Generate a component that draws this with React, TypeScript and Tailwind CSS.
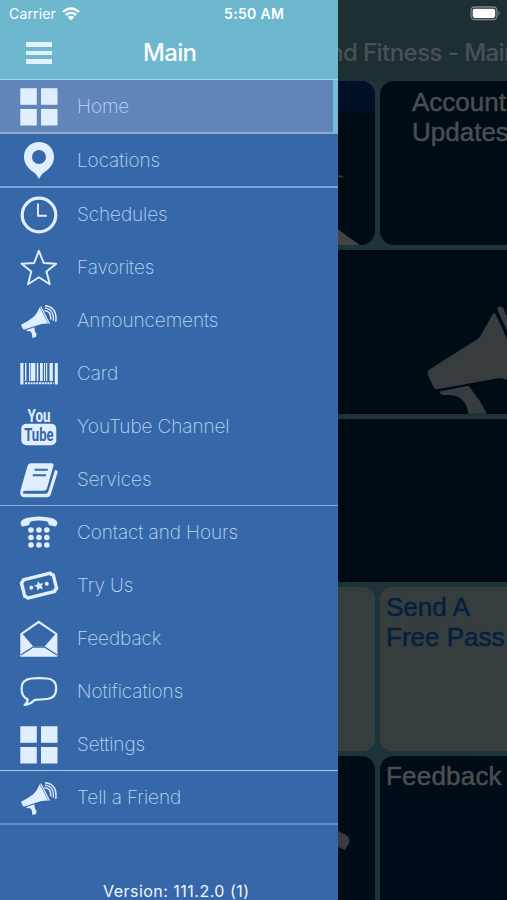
import type { ReactNode } from "react";

const Ic = ({ children }: { children: ReactNode }) => (
  <svg viewBox="0 0 38 38" className="h-[38px] w-[38px] shrink-0 overflow-visible" fill="currentColor">
    {children}
  </svg>
);

const line = (w: number) => ({ fill: "none", stroke: "currentColor", strokeWidth: w });

const Grid = () => (
  <Ic>
    <path d="M.3.3h16.5v16.5H.3zM21 .3h16.5v16.5H21zM.3 21h16.5v16.5H.3zM21 21h16.5v16.5H21z" />
  </Ic>
);
const Pin = () => (
  <Ic>
    <path fillRule="evenodd" d="M19 0C10.500 0 4 6.500 4 14.800C4 23 9.500 27.500 14 30.500C16.500 32.400 18 35 19 37C20 35 21.500 32.400 24 30.500C28.500 27.500 34 23 34 14.800C34 6.500 27.500 0 19 0ZM19 8a7 7 0 1 1 0 14a7 7 0 1 1 0-14Z" />
  </Ic>
);
const Clock = () => (
  <Ic>
    <circle cx="19" cy="19" r="16.800" {...line(3.2)} />
    <path d="M18 7.500V19.800H26.800" {...line(1.9)} />
  </Ic>
);
const Star = () => (
  <Ic>
    <path d="M18.900 1.800L23.700 14L36.200 14.700L26.500 22.600L29.800 35.200L18.900 28.200L8 35.200L11.300 22.600L1.600 14.700L14.100 14Z" strokeLinejoin="round" {...line(1.9)} />
  </Ic>
);
const Horn = () => (
  <Ic>
    <path d="M1 22.800Q8 19.500 13.500 15Q17.500 11 19.700 5.200L28.200 21.600Q22 21.500 15 24L3.800 27.800Q2 25.800 1 22.800Z" />
    <path d="M20.700 4.500L29.500 21.800" {...line(1.200)} />
    <path d="M6.500 27.900L14.500 25.200Q14 29 16.600 32.200L16 35L12.300 36Q12.300 31 10.500 29.600Q9 28.400 6.700 29.200Z" />
    <path d="M24.500 8.600Q31.400 9.300 30.800 17.500M25 3.800Q37.600 5 35.800 19.800" {...line(1.500)} />
    <path d="M24.800 6.200Q34.400 7 33.300 18.800" {...line(1.300)} />
  </Ic>
);
const Barcode = () => (
  <Ic>
    <path d="M.3 8h3.200v21.500H.3zM5 8h1.400v18H5zM9 8h1.400v18H9zM11 8h4.300v18H11zM16.800 8h1.500v18h-1.500zM20 8h2.800v18H20zM24 8h1v18h-1zM26 8h1.200v18H26zM29.500 8h3.300v18h-3.300zM34.800 8h3v21.500h-3z" />
    <path d="M5 28.300H33.500" strokeDasharray="2 .8" {...line(2)} />
  </Ic>
);
const Tube = () => (
  <Ic>
    <text x="7.500" y="13.800" textLength="23" lengthAdjust="spacingAndGlyphs" className="font-['Roboto'] text-[18px] font-bold">You</text>
    <rect x="1.300" y="15.700" width="35" height="21.500" rx="5" />
    <text x="4.200" y="33" textLength="29.500" lengthAdjust="spacingAndGlyphs" className="fill-[#3668a9] font-['Roboto'] text-[17.500px] font-bold">Tube</text>
  </Ic>
);
const Book = () => (
  <Ic>
    <path d="M10.500 2.200H31.500Q34.300 2.200 33.400 5L27 27.300Q26.300 29.700 24 29.700H5.500Q2.800 29.700 2.800 31.500Q2.800 32.700 5 32.700H26Q27.600 32.700 28.200 31L35 9Q38.200 9 37.400 12L30.800 33.300Q30 36.200 27 36.200H4.500Q-.2 36.200 .3 31Q.5 29 1.300 26.500L7.500 5Q8.300 2.200 10.500 2.200Z" />
    <path d="M14.600 8.800H27.800M12.800 14.300H26" className="stroke-[#3668a9] [stroke-width:1.900]" />
  </Ic>
);
const Phone = () => (
  <Ic>
    <path d="M.6 9.500Q.5 5.500 6.500 4Q19 .8 31.500 4Q37.500 5.500 37.400 9.500L36 12.600Q33 12.200 28.800 11Q28.800 8 26.500 7.300Q19 5.600 11.500 7.300Q9.200 8 9.200 11Q5 12.200 2 12.600Z" />
    {[16, 23.500, 31].map((y) => [11, 19, 26.800].map((x) => <circle key={`${x}-${y}`} cx={x} cy={y} r="2.800" />))}
  </Ic>
);
const Ticket = () => (
  <Ic>
    <g transform="rotate(-14 19 18.500)">
      <path d="M5 9.300H33Q33.300 11.300 35.400 11.600V25.800Q33.300 26.100 33 28H5Q4.700 26.100 2.600 25.800V11.600Q4.700 11.300 5 9.300Z" strokeLinejoin="round" {...line(3.4)} />
      <circle cx="11" cy="18.700" r="2" />
      <circle cx="27" cy="18.700" r="2" />
      <path d="M19 14L20.400 17L23.800 17.400L21.300 19.700L22 23.100L19 21.400L16 23.100L16.700 19.700L14.200 17.400L17.600 17Z" />
    </g>
  </Ic>
);
const Mail = () => (
  <Ic>
    <path fillRule="evenodd" d="M18.700.5L37.400 13.500V36.500H.3V13.500ZM18.700 3.300L2.700 14.200L13 26.200H24.800L35.200 14.200Z" />
    <path d="M.8 35L13.300 27H24.500L37 35" className="fill-none stroke-[#3668a9] [stroke-width:1.300]" />
    <path d="M.3 36.500L13.500 28H24.300L37.400 36.500Z" />
  </Ic>
);
const Bubble = () => (
  <Ic>
    <path d="M11.500 5.500Q19 4.700 27 5.500Q36.300 6.500 36.200 15.200Q36.300 25.200 27 26Q20 26.500 14.800 26.800Q10.800 31.300 4.500 32Q7.700 29.500 7.700 26.200Q1.600 24 1.600 15.500Q1.500 6.500 11.500 5.500Z" strokeLinejoin="round" {...line(2.200)} />
  </Ic>
);

type Item = [string, () => ReactNode, string];
const items: Item[] = [
  ["Home", Grid, "h-[54px] border-b-2 border-[#8fa9d0] bg-[#6285b9]"],
  ["Locations", Pin, "h-[54px] border-b-2 border-[#82a6d3]"],
  ["Schedules", Clock, "h-[53px]"],
  ["Favorites", Star, "h-[53px]"],
  ["Announcements", Horn, "h-[53px]"],
  ["Card", Barcode, "h-[53px]"],
  ["YouTube Channel", Tube, "h-[53px]"],
  ["Services", Book, "h-[53px] border-b border-[#8daedb]"],
  ["Contact and Hours", Phone, "h-[53px]"],
  ["Try Us", Ticket, "h-[53px]"],
  ["Feedback", Mail, "h-[53px]"],
  ["Notifications", Bubble, "h-[53px]"],
  ["Settings", Grid, "h-[53px] border-b border-[#a9cbea]"],
  ["Tell a Friend", Horn, "h-[54px] border-b-2 border-[#6193c9]"],
];

const Wifi = () => (
  <svg viewBox="0 0 18 14" className="h-[14px] w-[18px]">
    <path d="M1 5Q9-2 17 5M3.800 8Q9 3.800 14.200 8" fill="none" stroke="white" strokeWidth="2.300" />
    <path d="M5.700 10Q9 7.400 12.300 10L9 13.500Z" fill="white" />
  </svg>
);

function Drawer() {
  return (
    <aside className="flex h-full w-[338px] shrink-0 flex-col bg-[#3668a9]">
      <header className="h-[80px] shrink-0 bg-[#6db7cf] text-white">
        <div className="flex h-[27px] items-center pl-[9px]">
          <span className="w-[53px] text-[14px] tracking-[0.15px] whitespace-nowrap">Carrier</span>
          <Wifi />
          <span className="ml-[144px] text-[14px] font-semibold tracking-[0.35px] whitespace-nowrap">5:50 AM</span>
        </div>
        <div className="flex h-[52px] items-center pl-[26px]">
          <div className="flex w-[26px] flex-col gap-[4px]">
            <i className="h-[4.500px] bg-[#e2f2ff]" />
            <i className="h-[4.500px] bg-[#e2f2ff]" />
            <i className="h-[4.500px] bg-[#e2f2ff]" />
          </div>
          <h1 className="ml-[91px] text-[24px] font-medium tracking-[-0.7px]">Main</h1>
        </div>
        <div className="h-[2px] bg-[#a5d5ed]" />
      </header>
      <nav>
        {items.map(([label, Icon, cls], i) => (
          <div key={label} className={`flex items-center pt-[1px] pl-[20px] text-[#e0efff] ${cls}`}>
            <Icon />
            <span className="ml-[19px] flex-1 pt-[1px] text-[19px] font-extralight tracking-[-0.1px] whitespace-nowrap text-[#bcd8f6]">{label}</span>
            {i === 0 && <i className="-mt-[1px] w-[5px] self-stretch bg-[#71bfd5]" />}
          </div>
        ))}
      </nav>
      <footer className="mt-auto pl-[103px] text-[16px] leading-[17px] tracking-[0.48px] whitespace-nowrap text-[#f2f7ff]">Version: 111.2.0 (1)</footer>
    </aside>
  );
}

function Backdrop() {
  return (
    <main className="flex h-full w-[169px] flex-col overflow-hidden bg-[#1f333b]">
      <header className="h-[81px] shrink-0 bg-[#1e2f33]">
        <div className="flex h-[27px] items-center justify-end pr-[6px]">
          <svg viewBox="0 0 31 15" className="h-[15px] w-[31px]">
            <rect x="1" y="1" width="26" height="12.500" rx="3.500" fill="none" stroke="#7e898c" strokeWidth="1.300" />
            <rect x="2.700" y="2.700" width="22.500" height="9.200" rx="1.800" fill="white" />
            <path d="M28.700 5Q30.800 7.200 28.700 9.500Z" fill="#7e898c" />
          </svg>
        </div>
        <div className="-ml-[9px] flex h-[51px] items-center text-[24px] font-medium tracking-[-0.55px] whitespace-nowrap text-[#4b5052]">nd Fitness - Main</div>
      </header>
      <div className="flex w-[210px] flex-col gap-[5px] font-['Liberation_Sans',Arial,sans-serif] text-[26px] leading-[30px] [-webkit-text-stroke:0.5px]">
        <div className="flex h-[163.750px] gap-[5px]">
          <div className="w-[37px] overflow-hidden rounded-r-[14px] bg-[#000c14]">
            <svg viewBox="0 0 37 164" className="h-[164px] w-[37px]">
              <defs>
                <linearGradient id="glow" x2="0" y2="1">
                  <stop offset="0" stopColor="#001029" />
                  <stop offset=".7" stopColor="#001029" />
                  <stop offset="1" stopColor="#000c14" />
                </linearGradient>
              </defs>
              <path d="M0 0H37V36L0 30Z" fill="url(#glow)" />
              <path d="M0 94Q4 94 6 97L0 96Z" fill="#33383b" />
              <path d="M0 148L9 155L22 164H0Z" fill="#444342" />
            </svg>
          </div>
          <div className="flex-1 rounded-[14px] bg-[#000c14] pt-[6px] pl-[32px] text-[#4b4e50]">Account<br />Updates</div>
        </div>
        <div className="h-[163.750px] overflow-hidden bg-[#000c14]">
          <svg viewBox="0 0 169 163.750" className="h-[163.750px] w-[169px]" fill="#373d3f">
            <path d="M89.500 122Q89.800 120.500 91 119.700L139.500 89Q142 87.300 143 85L154.500 64.500Q156.200 61.800 157.800 64.500L169 89V130Q164 127.500 159 128.500L99 139.300Q96.800 139.700 95.800 137.700L89.800 125Z" />
            <path d="M162.500 59.500L174 84" stroke="#373d3f" strokeWidth="6" strokeLinecap="round" />
            <path d="M103 141.300L129 136Q130.500 135.600 131.500 137L140.500 149Q145 156 148.700 163.750H130.300Q129 153 122.500 148.500Q118 145 111 145H105Q102 144.500 102 142.300Z" />
          </svg>
        </div>
        <div className="h-[163.750px] bg-[#000c14]" />
        <div className="flex h-[163.750px] gap-[5px]">
          <div className="w-[37px] rounded-r-[12px] bg-[#363d3f]" />
          <div className="flex-1 rounded-[12px] bg-[#363d3f] pt-[5px] pl-[6px] text-[#04203e]">Send A<br />Free Pass</div>
        </div>
        <div className="flex h-[163.750px] gap-[5px]">
          <div className="w-[37px] overflow-hidden rounded-r-[14px] bg-[#000c17]">
            <svg viewBox="0 0 37 164" className="h-[164px] w-[37px]">
              <path d="M0 75L8 79Q13 82 11 87L7 94L0 91Z" fill="#373d3f" />
            </svg>
          </div>
          <div className="flex-1 rounded-[14px] bg-[#000c17] pt-[5px] pl-[6px] tracking-[0.2px] text-[#4b4e50]">Feedback</div>
        </div>
      </div>
    </main>
  );
}

export default function App() {
  return (
    <div className="flex h-[900px] w-[507px] overflow-hidden font-['Inter',sans-serif]">
      <Drawer />
      <Backdrop />
    </div>
  );
}
